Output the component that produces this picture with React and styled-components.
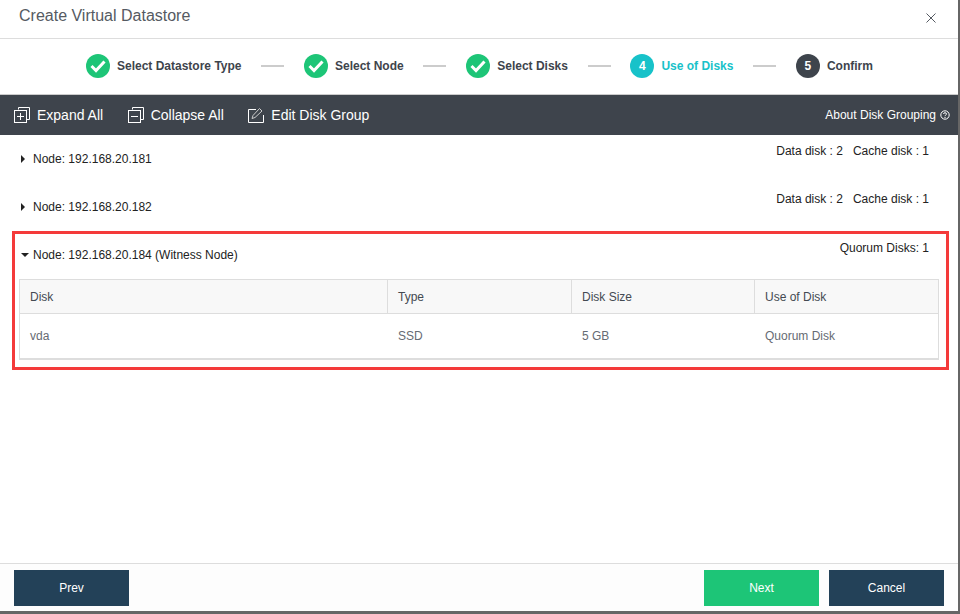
import React from "react";
import styled, { createGlobalStyle } from "styled-components";

const GlobalStyle = createGlobalStyle`
  html, body {
    margin: 0;
    padding: 0;
    height: 614px;
    overflow: hidden;
    background-color: #666;
    font-family: "Liberation Sans", Arial, sans-serif;
  }
`;

const Dialog = styled.div`
  display: flex;
  flex-direction: column;
  width: 958px;
  height: 611px;
  background-color: #fff;
`;

const Header = styled.div`
  display: flex;
  justify-content: space-between;
  height: 38px;
  padding: 0 22px 0 19px;
  border-bottom: 1px solid #ddd;
`;

const Title = styled.h1`
  margin: 6px 0 0;
  font-size: 16px;
  line-height: 20px;
  font-weight: 400;
  color: #555a62;
`;

const CloseButton = styled.button`
  width: 10px;
  height: 10px;
  margin-top: 13px;
  padding: 0;
  border: none;
  background: none;
  display: flex;
`;

const Stepper = styled.div`
  display: flex;
  align-items: center;
  justify-content: flex-start;
  height: 56px;
  padding-left: 86px;
  padding-bottom: 2px;
  box-sizing: border-box;
  border-bottom: 1px solid #ccc;
`;

const StepCircle = styled.span`
  display: flex;
  align-items: center;
  justify-content: center;
  width: 24px;
  height: 24px;
  border-radius: 50%;
  background-color: ${(p) => p.$color};
  color: #fff;
  font-size: 12px;
  font-weight: 700;
`;

const StepLabel = styled.span`
  margin-left: 7px;
  font-size: 12px;
  font-weight: 700;
  color: ${(p) => p.$color || "#3e444c"};
  white-space: nowrap;
`;

const StepLine = styled.span`
  width: 23px;
  height: 2px;
  margin: 0 19.75px;
  background-color: #ccc;
`;

const Toolbar = styled.div`
  display: flex;
  align-items: center;
  height: 40px;
  padding: 0 8px 0 14px;
  background-color: #3e444c;
  color: #fff;
`;

const ToolButton = styled.button`
  display: flex;
  align-items: center;
  gap: 7px;
  margin-right: 24.5px;
  padding: 0;
  border: none;
  background: none;
  color: #fff;
  font-family: inherit;
  font-size: 14px;
`;

const HelpLink = styled.a`
  display: flex;
  align-items: center;
  gap: 4px;
  margin-left: auto;
  margin-bottom: 1px;
  font-size: 12px;
  color: #fff;
`;

const Content = styled.div`
  flex: 1;
  display: flex;
  flex-direction: column;
  padding: 0 9px 0 12px;
`;

const NodeRow = styled.div`
  display: flex;
  justify-content: space-between;
  height: 48px;
  padding: 9px 20px 0 9px;
  box-sizing: border-box;
`;

const NodeTitle = styled.div`
  display: flex;
  align-items: center;
  gap: 6px;
  height: 14px;
  margin-top: 8px;
  font-size: 12px;
  color: #222;
`;

const Caret = styled.span`
  width: 0;
  height: 0;
  ${(p) =>
    p.$open
      ? `border-left: 4px solid transparent;
         border-right: 4px solid transparent;
         border-top: 4px solid #222;
         margin-right: -2px;`
      : `border-top: 4px solid transparent;
         border-bottom: 4px solid transparent;
         border-left: 4px solid #222;
         margin: 0 2px 0 0;`}
`;

const NodeStats = styled.div`
  display: flex;
  gap: 10px;
  height: 14px;
  font-size: 12px;
  line-height: 14px;
  color: #222;
`;

const Highlight = styled.div`
  height: 139px;
  box-sizing: border-box;
  border: 3px solid #f43a3a;
  padding: 0 7px 0 4px;
`;

const HighlightHead = styled.div`
  display: flex;
  justify-content: space-between;
  height: 45px;
  padding: 7px 10px 0 2px;
  box-sizing: border-box;

  & ${NodeTitle} {
    margin-top: 7px;
  }
`;

const Table = styled.div`
  border: 1px solid #ddd;
  border-bottom-width: 2px;
`;

const TableRow = styled.div`
  display: grid;
  grid-template-columns: 367px 184px 183px 1fr;
  height: ${(p) => p.$height}px;
  background-color: ${(p) => p.$bg || "#fff"};
  border-bottom: ${(p) => (p.$head ? "1px solid #ddd" : "none")};
  box-sizing: border-box;
`;

const HeadCell = styled.div`
  display: flex;
  align-items: center;
  padding-left: 10px;
  font-size: 12px;
  color: #444a52;
  border-left: ${(p) => (p.$first ? "none" : "1px solid #ddd")};
`;

const BodyCell = styled.div`
  display: flex;
  align-items: center;
  padding-left: ${(p) => (p.$first ? "10px" : "11px")};
  font-size: 12px;
  color: #666b73;
`;

const Footer = styled.div`
  display: flex;
  align-items: flex-start;
  gap: 10px;
  height: 48px;
  padding: 6px 14px 0;
  box-sizing: border-box;
  background-color: #fdfdfd;
  border-top: 1px solid #ddd;
`;

const FooterButton = styled.button`
  width: 115px;
  height: 36px;
  border: none;
  padding: 0;
  background-color: ${(p) => p.$bg};
  color: #fff;
  font-family: inherit;
  font-size: 12px;
  margin-left: ${(p) => (p.$pushed ? "auto" : "0")};
`;

function CheckIcon() {
  return (
    <svg width="18" height="14" viewBox="0 0 18 14" fill="none">
      <path d="M2.5 7L7 11.5L15.5 2.5" stroke="#fff" strokeWidth="3" />
    </svg>
  );
}

function ExpandIcon({ minus }) {
  return (
    <svg width="16" height="16" viewBox="0 0 16 16" fill="none" stroke="#fff">
      <path d="M4.5 2.5V0.5H15.5V12.5H13" />
      <rect x="0.5" y="3.5" width="12" height="12" />
      <path d={minus ? "M3 9.5H10" : "M3 9.5H10M6.5 6V13"} />
    </svg>
  );
}

function EditIcon() {
  return (
    <svg width="16" height="16" viewBox="0 0 16 16" fill="none" stroke="#fff">
      <path d="M8 2.5H0.5V15.5H15.5V8" />
      <path d="M4 11.5L5 8.5L11.5 1.5L14 4L7 10.5Z" stroke="#ccc" />
    </svg>
  );
}

const steps = [
  { label: "Select Datastore Type", done: true },
  { label: "Select Node", done: true },
  { label: "Select Disks", done: true },
  { label: "Use of Disks", num: 4, color: "#17c2c9" },
  { label: "Confirm", num: 5, color: "#3e444c" },
];

export default function App() {
  return (
    <>
      <GlobalStyle />
      <Dialog>
        <Header>
          <Title>Create Virtual Datastore</Title>
          <CloseButton>
            <svg width="10" height="10" viewBox="0 0 10 10" stroke="#555a62">
              <path d="M0.5 0.5L9.5 9.5M9.5 0.5L0.5 9.5" />
            </svg>
          </CloseButton>
        </Header>
        <Stepper>
          {steps.map((s, i) => (
            <React.Fragment key={s.label}>
              <StepCircle $color={s.done ? "#1dc577" : s.color}>
                {s.done ? <CheckIcon /> : s.num}
              </StepCircle>
              <StepLabel $color={s.num === 4 ? s.color : undefined}>
                {s.label}
              </StepLabel>
              {i < steps.length - 1 && <StepLine />}
            </React.Fragment>
          ))}
        </Stepper>
        <Toolbar>
          <ToolButton>
            <ExpandIcon />
            Expand All
          </ToolButton>
          <ToolButton>
            <ExpandIcon minus />
            Collapse All
          </ToolButton>
          <ToolButton>
            <EditIcon />
            Edit Disk Group
          </ToolButton>
          <HelpLink>
            About Disk Grouping
            <svg width="10" height="10" viewBox="0 0 10 10" fill="none" stroke="#fff">
              <circle cx="5" cy="5" r="4.2" />
              <path d="M3.5 4C3.5 2.3 6.5 2.3 6.5 4C6.5 5 5 5 5 6.2M5 7V8" />
            </svg>
          </HelpLink>
        </Toolbar>
        <Content>
          <NodeRow>
            <NodeTitle>
              <Caret />
              Node: 192.168.20.181
            </NodeTitle>
            <NodeStats>
              <span>Data disk : 2</span>
              <span>Cache disk : 1</span>
            </NodeStats>
          </NodeRow>
          <NodeRow>
            <NodeTitle>
              <Caret />
              Node: 192.168.20.182
            </NodeTitle>
            <NodeStats>
              <span>Data disk : 2</span>
              <span>Cache disk : 1</span>
            </NodeStats>
          </NodeRow>
          <Highlight>
            <HighlightHead>
              <NodeTitle>
                <Caret $open />
                Node: 192.168.20.184 (Witness Node)
              </NodeTitle>
              <NodeStats>
                <span>Quorum Disks: 1</span>
              </NodeStats>
            </HighlightHead>
            <Table>
              <TableRow $head $bg="#f8f8f8" $height={34}>
                <HeadCell $first>Disk</HeadCell>
                <HeadCell>Type</HeadCell>
                <HeadCell>Disk Size</HeadCell>
                <HeadCell>Use of Disk</HeadCell>
              </TableRow>
              <TableRow $height={44}>
                <BodyCell $first>vda</BodyCell>
                <BodyCell>SSD</BodyCell>
                <BodyCell>5 GB</BodyCell>
                <BodyCell>Quorum Disk</BodyCell>
              </TableRow>
            </Table>
          </Highlight>
        </Content>
        <Footer>
          <FooterButton $bg="#234158">Prev</FooterButton>
          <FooterButton $bg="#1dc577" $pushed>
            Next
          </FooterButton>
          <FooterButton $bg="#234158">Cancel</FooterButton>
        </Footer>
      </Dialog>
    </>
  );
}
